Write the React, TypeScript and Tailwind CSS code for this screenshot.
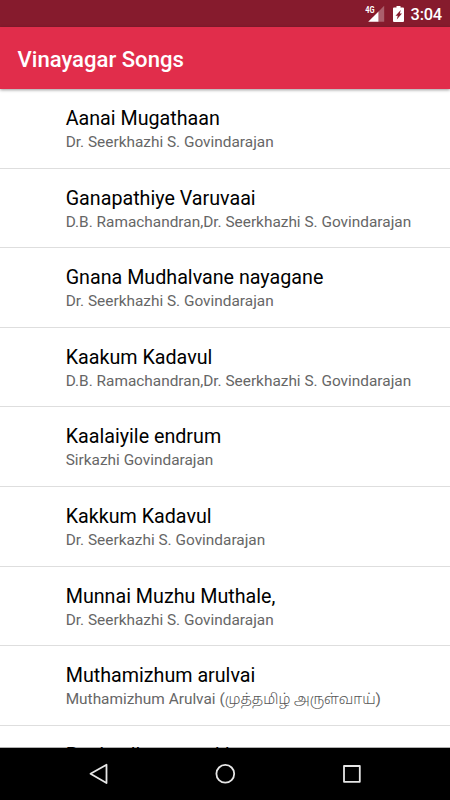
const songs = [
  ['Aanai Mugathaan', 'Dr. Seerkhazhi S. Govindarajan'],
  ['Ganapathiye Varuvaai', 'D.B. Ramachandran,Dr. Seerkhazhi S. Govindarajan'],
  ['Gnana Mudhalvane nayagane', 'Dr. Seerkhazhi S. Govindarajan'],
  ['Kaakum Kadavul', 'D.B. Ramachandran,Dr. Seerkhazhi S. Govindarajan'],
  ['Kaalaiyile endrum', 'Sirkazhi Govindarajan'],
  ['Kakkum Kadavul', 'Dr. Seerkazhi S. Govindarajan'],
  ['Munnai Muzhu Muthale,', 'Dr. Seerkhazhi S. Govindarajan'],
  ['Muthamizhum arulvai', 'Muthamizhum Arulvai (', 'முத்தமிழ் அருள்வாய்', ')'],
  ['Paakaallam vanakkam', ''],
];

function StatusBar() {
  return (
    <div className="flex h-[27px] shrink-0 justify-end bg-[#861b2d] text-white">
      <svg className="mt-[5px] h-[18px] w-[21px]" viewBox="0 0 21 18">
        <path d="M19.200 0.700v16H13.500V6.400z" fill="#fff" fillOpacity=".3" />
        <path d="M13.500 6.400v10.300H3.200z" fill="#fff" />
        <rect x="0" y="0" width="10" height="9" fill="#861b2d" />
        <text x="0.200" y="8" fontSize="9.500" fontWeight="700" textLength="9.300" lengthAdjust="spacingAndGlyphs" fill="#fff">4G</text>
      </svg>
      <svg className="mt-[6px] ml-[7px] h-[16px] w-[11px]" viewBox="0 0 11 16">
        <path d="M3.500 0h4v1.500H10q1 0 1 1V15q0 1-1 1H1q-1 0-1-1V2.500q0-1 1-1h2.500z" fill="#fff" />
        <path d="M7.800 4l-1 3.600H9L3.800 13.500l1-3.800H2.500z" fill="#861b2d" />
      </svg>
      <span className="mt-[3px] mr-[8px] ml-[6.500px] text-[16.400px] leading-[24px] font-medium tracking-[-0.2px]">3:04</span>
    </div>
  );
}

function NavigationBar() {
  return (
    <nav className="flex h-[52px] shrink-0 items-center bg-black pl-[88px]">
      <svg className="h-[24px] w-[24px]" viewBox="0 0 24 24" fill="none" stroke="#e6e6e6" strokeWidth="1.8" strokeLinejoin="round">
        <path d="M18.500 2.700v18.300L2.500 11.800z" />
      </svg>
      <svg className="ml-[101px] h-[24px] w-[24px]" viewBox="0 0 24 24" fill="none" stroke="#e6e6e6" strokeWidth="1.8">
        <circle cx="12.300" cy="11.800" r="8.900" />
      </svg>
      <svg className="ml-[102px] h-[24px] w-[24px]" viewBox="0 0 24 24" fill="none" stroke="#e6e6e6" strokeWidth="1.8" strokeLinejoin="round">
        <rect x="5" y="4" width="15.800" height="15.800" />
      </svg>
    </nav>
  );
}

export default function App() {
  return (
    <div className="flex h-[800px] w-[450px] flex-col overflow-hidden bg-white font-[Roboto,'Noto_Sans_Tamil','Noto_Sans',sans-serif]">
      <StatusBar />
      <header className="relative flex h-[62px] shrink-0 items-center bg-[#e12d4b] pt-[4px] pl-[17.500px] text-[22.100px] font-medium text-white shadow-[0_1px_3px_rgba(0,0,0,0.4)]">
        Vinayagar Songs
      </header>
      <main className="min-h-0 flex-1 overflow-hidden bg-[linear-gradient(to_top,#b0b0b0_1px,white_1px)]">
        {songs.map(([title, artist, tamil, end]) => (
          <div key={title} className="h-[79.600px] border-b border-[#dedede] pt-[17px] pl-[65.700px] whitespace-nowrap">
            <div className="text-[19.700px] leading-[25px] text-black">{title}</div>
            <div className="h-[22px] text-[15.400px] leading-[22px] text-[#666]">
              {artist}
              {tamil && <span className="text-[14.400px] leading-none font-light text-[#555]">{tamil}</span>}
              {end}
            </div>
          </div>
        ))}
      </main>
      <NavigationBar />
    </div>
  );
}
